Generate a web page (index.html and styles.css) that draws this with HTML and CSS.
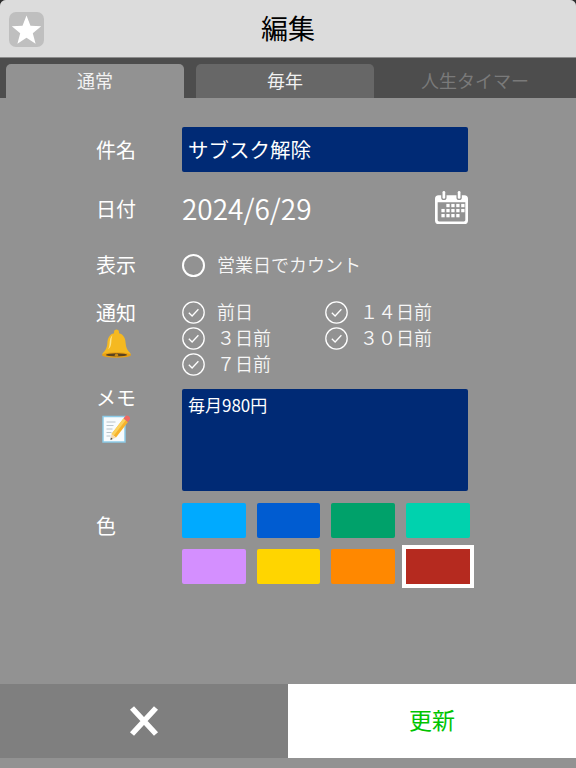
FILE: index.html
```html
<!DOCTYPE html>
<html lang="ja">
<head>
    <meta charset="UTF-8">
    <meta name="viewport" content="width=device-width, initial-scale=1.0">
    <title>編集</title>
    <link rel="stylesheet" href="styles.css">
</head>
<body>
    <div class="page">
        <header class="title-bar">
            <div class="star-button">
                <svg viewBox="0 0 32 32" width="31" height="31"><path d="M16 1.500l4.100 10.600 11.100.6-8.700 7.100 2.900 10.900L16 24.600l-9.400 6.100 2.900-10.900-8.700-7.100 11.100-.6z" fill="#fff"/></svg>
            </div>
            <h1>編集</h1>
        </header>

        <div class="tabs">
            <div class="tab active">通常</div>
            <div class="tab">毎年</div>
            <div class="tab disabled">人生タイマー</div>
        </div>

        <main class="form">
            <div class="row row-name">
                <div class="label">件名</div>
                <div class="name-input">サブスク解除</div>
            </div>

            <div class="row row-date">
                <div class="label">日付</div>
                <div class="date-value">2024/6/29</div>
                <svg class="calendar" viewBox="0 0 32 32" width="33" height="33">
                    <path d="M3.500 4h2.500v2.200a2.600 2.600 0 0 0 5.200 0V4h9.600v2.200a2.600 2.600 0 0 0 5.200 0V4h2.500A3.500 3.500 0 0 1 32 7.500v21a3.500 3.500 0 0 1-3.500 3.500h-25A3.500 3.500 0 0 1 0 28.500v-21A3.500 3.500 0 0 1 3.500 4zM2.600 11v17.100c0 .8.600 1.400 1.400 1.400h24c.8 0 1.400-.6 1.400-1.400V11z" fill="#fff" fill-rule="evenodd"/>
                    <rect x="7.300" y="0" width="2.600" height="7.500" rx="1.300" fill="#fff"/>
                    <rect x="22.100" y="0" width="2.600" height="7.500" rx="1.300" fill="#fff"/>
                    <g fill="#fff">
                        <rect x="11" y="12.500" width="3.200" height="3.200"/><rect x="15.800" y="12.500" width="3.200" height="3.200"/><rect x="20.600" y="12.500" width="3.200" height="3.200"/><rect x="25.400" y="12.500" width="3.200" height="3.200"/>
                        <rect x="6.200" y="17.400" width="3.200" height="3.200"/><rect x="11" y="17.400" width="3.200" height="3.200"/><rect x="15.800" y="17.400" width="3.200" height="3.200"/><rect x="20.600" y="17.400" width="3.200" height="3.200"/><rect x="25.400" y="17.400" width="3.200" height="3.200"/>
                        <rect x="6.200" y="22.300" width="3.200" height="3.200"/><rect x="11" y="22.300" width="3.200" height="3.200"/><rect x="15.800" y="22.300" width="3.200" height="3.200"/><rect x="20.600" y="22.300" width="3.200" height="3.200"/>
                    </g>
                </svg>
            </div>

            <div class="row row-display">
                <div class="label">表示</div>
                <div class="option">
                    <span class="circle"></span>
                    <span class="option-text">営業日でカウント</span>
                </div>
            </div>

            <div class="row row-notify">
                <div class="label-stack">
                    <div class="label">通知</div>
                    <svg class="label-icon" viewBox="1 1 26 26" width="29" height="29">
                        <path d="M14 1.500c1.300 0 2.200.9 2.200 2v1.300c4.300 1 5.800 4.700 6 9 .2 4 1.700 6.700 4.300 8.900v1.300H1.500v-1.300c2.600-2.200 4.100-4.900 4.300-8.900.2-4.300 1.700-8 6-9V3.500c0-1.100.9-2 2.200-2z" fill="#f5b921"/>
                        <path d="M10.500 6.500c-2 1.500-2.500 4-2.700 7.500-.1 2-.5 3.700-1.300 5.300 2-1.500 2.600-3.500 2.800-6 .2-2.800.3-5 1.200-6.800z" fill="#fde58a"/>
                        <ellipse cx="14" cy="24.300" rx="13" ry="2.500" fill="#e8a013"/>
                        <ellipse cx="14" cy="24.200" rx="9.500" ry="1.400" fill="#5a4320"/>
                        <circle cx="14" cy="24.500" r="1.500" fill="#c98a12"/>
                    </svg>
                </div>
                <div class="checks">
                    <div class="check-col">
                        <div class="option check"><svg class="check-icon" viewBox="0 0 23 23" width="23" height="23"><circle cx="11.500" cy="11.500" r="10.700"/><path d="M6.800 11.800l3.300 3.200 6.300-6.800"/></svg><span class="option-text">前日</span></div>
                        <div class="option check"><svg class="check-icon" viewBox="0 0 23 23" width="23" height="23"><circle cx="11.500" cy="11.500" r="10.700"/><path d="M6.800 11.800l3.300 3.200 6.300-6.800"/></svg><span class="option-text">３日前</span></div>
                        <div class="option check"><svg class="check-icon" viewBox="0 0 23 23" width="23" height="23"><circle cx="11.500" cy="11.500" r="10.700"/><path d="M6.800 11.800l3.300 3.200 6.300-6.800"/></svg><span class="option-text">７日前</span></div>
                    </div>
                    <div class="check-col">
                        <div class="option check"><svg class="check-icon" viewBox="0 0 23 23" width="23" height="23"><circle cx="11.500" cy="11.500" r="10.700"/><path d="M6.800 11.800l3.300 3.200 6.300-6.800"/></svg><span class="option-text">１４日前</span></div>
                        <div class="option check"><svg class="check-icon" viewBox="0 0 23 23" width="23" height="23"><circle cx="11.500" cy="11.500" r="10.700"/><path d="M6.800 11.800l3.300 3.200 6.300-6.800"/></svg><span class="option-text">３０日前</span></div>
                    </div>
                </div>
            </div>

            <div class="row row-memo">
                <div class="label-stack">
                    <div class="label">メモ</div>
                    <svg class="label-icon" viewBox="0 0 28 28" width="28" height="28">
                        <rect x="1" y="1.500" width="22" height="25.500" fill="#f7fbfd" stroke="#8ccbe8" stroke-width="1.500"/>
                        <path d="M4.500 7h9M4.500 10.500h7M4.500 14h6M4.500 17.500h5M4.500 21h4" stroke="#b9c4cc" stroke-width="1"/>
                        <path d="M21.500 3.500l4.500 3.500L14 22.500l-4.500-3.500z" fill="#f7b32b"/>
                        <path d="M21.500 3.500l2.200 1.700-12 15.500-2.200-1.700z" fill="#fbd25e"/>
                        <path d="M22.800 1.800a2.800 2.800 0 0 1 4.500 3.500L26 7l-4.500-3.500z" fill="#ee6a63"/>
                        <path d="M9.500 19L14 22.500 8.500 25z" fill="#f3d9b1"/>
                        <path d="M8.800 22.600l1.900 1.500-2.200 1z" fill="#444"/>
                    </svg>
                </div>
                <div class="memo-input">毎月980円</div>
            </div>

            <div class="row row-color">
                <div class="label">色</div>
                <div class="swatches">
                    <div class="swatch swatch-sky"></div>
                    <div class="swatch swatch-blue"></div>
                    <div class="swatch swatch-green"></div>
                    <div class="swatch swatch-teal"></div>
                    <div class="swatch swatch-purple"></div>
                    <div class="swatch swatch-yellow"></div>
                    <div class="swatch swatch-orange"></div>
                    <div class="swatch swatch-red selected"></div>
                </div>
            </div>
        </main>

        <footer class="actions">
            <div class="cancel">
                <svg viewBox="0 0 30 32" width="30" height="32"><path d="M3 3l24 26M27 3L3 29" stroke="#fff" stroke-width="5.500" fill="none"/></svg>
            </div>
            <div class="update">更新</div>
        </footer>
    </div>
</body>
</html>
```

FILE: styles.css
```css
body {
    margin: 0;
    padding: 0;
    background-color: #2e2e2e;
    font-family: "Noto Sans CJK JP", "Noto Sans", sans-serif;
    color: #ffffff;
}
.page {
    width: 576px;
    height: 768px;
    display: flex;
    flex-direction: column;
    overflow: hidden;
    background-color: #929292;
    border-radius: 6px 6px 0 0;
}
.title-bar {
    height: 57px;
    display: flex;
    align-items: center;
    justify-content: center;
    position: relative;
    background-color: #dcdcdc;
    border-bottom: 1px solid #8c8c8c;
}
.title-bar h1 {
    margin: 0 0 2px;
    font-size: 27px;
    font-weight: 400;
    color: #000000;
}
.star-button {
    position: absolute;
    top: 12px;
    left: 9px;
    width: 35px;
    height: 35px;
    display: flex;
    align-items: center;
    justify-content: center;
    background-color: #bfbfbf;
    border-radius: 7px;
}
.tabs {
    height: 40px;
    box-sizing: border-box;
    padding: 6px 6px 0;
    display: flex;
    gap: 12px;
    background-color: #4d4d4d;
}
.tab {
    width: 178px;
    box-sizing: border-box;
    padding-bottom: 2px;
    display: flex;
    align-items: center;
    justify-content: center;
    font-size: 18px;
    border-radius: 5px 5px 0 0;
    background-color: #676767;
    color: #f2f2f2;
}
.tab.active {
    background-color: #929292;
}
.tab.disabled {
    background-color: transparent;
    color: #7a7a7a;
}
.form {
    flex: 1;
    padding: 29px 0 0 96px;
    font-weight: 300;
}
.row {
    display: flex;
}
.label {
    width: 86px;
    font-size: 20px;
    line-height: 28px;
    color: #ffffff;
    font-weight: 400;
}
.label-stack {
    width: 86px;
}
.label-stack .label {
    width: 40px;
    text-align: center;
}
.label-icon {
    display: block;
    margin: 2px 0 0 6px;
}
.row-name {
    height: 45px;
    align-items: center;
}
.name-input {
    width: 286px;
    height: 45px;
    box-sizing: border-box;
    padding: 0 0 2px 6px;
    display: flex;
    align-items: center;
    font-size: 20.500px;
    font-weight: 400;
    background-color: #002a75;
    border-radius: 2px;
}
.row-date {
    width: 372px;
    height: 44px;
    margin-top: 15px;
    align-items: center;
}
.date-value {
    flex: 1;
    margin-bottom: 3px;
    font-size: 28px;
    font-weight: 350;
}
.calendar {
    margin-bottom: 4px;
}
.row-display {
    height: 28px;
    margin-top: 20px;
    align-items: center;
}
.option {
    display: flex;
    align-items: center;
    font-size: 18px;
    font-weight: 350;
    color: #f7f7f7;
}
.option-text {
    margin-bottom: 2px;
}
.circle {
    width: 19px;
    height: 19px;
    border: 2px solid #ffffff;
    border-radius: 50%;
    margin-right: 12px;
}
.row-notify {
    margin-top: 20px;
}
.checks {
    display: flex;
    gap: 33px;
}
.check-col {
    width: 110px;
}
.check {
    height: 26px;
}
.check-icon {
    margin-right: 12px;
    fill: none;
    stroke: #ffffff;
    stroke-width: 1.300;
}
.row-memo {
    margin-top: 12px;
}
.row-memo .label {
    margin-top: -5px;
}
.row-memo .label-icon {
    margin-top: 3px;
}
.memo-input {
    width: 286px;
    height: 102px;
    box-sizing: border-box;
    padding: 4px 6px;
    font-size: 17px;
    line-height: 24px;
    font-weight: 400;
    background-color: #002a75;
    border-radius: 2px;
}
.row-color {
    margin-top: 12px;
}
.row-color .label {
    padding-top: 9px;
}
.swatches {
    width: 288px;
    display: grid;
    grid-template-columns: repeat(4, 63.500px);
    grid-auto-rows: 35px;
    column-gap: 11.200px;
    row-gap: 11px;
}
.swatch {
    border-radius: 2px;
}
.swatch-sky { background-color: #00aaff; }
.swatch-blue { background-color: #005cd1; }
.swatch-green { background-color: #00a16a; }
.swatch-teal { background-color: #00d2ae; }
.swatch-purple { background-color: #d48fff; }
.swatch-yellow { background-color: #ffd500; }
.swatch-orange { background-color: #ff8800; }
.swatch-red { background-color: #b52a1f; }
.swatch.selected {
    outline: 4px solid #ffffff;
    border-radius: 0;
}
.actions {
    height: 74px;
    margin-bottom: 10px;
    display: flex;
}
.cancel, .update {
    width: 288px;
    display: flex;
    align-items: center;
    justify-content: center;
}
.cancel {
    background-color: #7f7f7f;
}
.update {
    box-sizing: border-box;
    padding-bottom: 4px;
    background-color: #ffffff;
    color: #00c400;
    font-size: 23px;
}
```
